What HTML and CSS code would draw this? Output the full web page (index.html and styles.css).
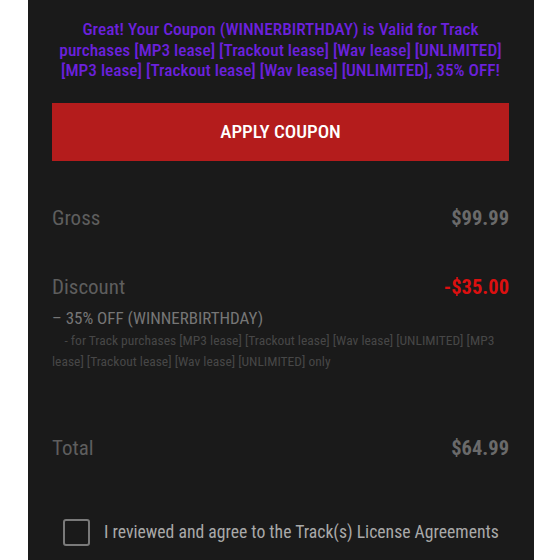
FILE: index.html
```html
<!DOCTYPE html>
<html lang="en">
<head>
  <meta charset="UTF-8">
  <meta name="viewport" content="width=device-width, initial-scale=1.0">
  <title>Checkout - Coupon</title>
  <link rel="stylesheet" href="styles.css">
</head>
<body>
  <div class="panel">
    <p class="notice">Great! Your Coupon (WINNERBIRTHDAY) is Valid for Track purchases [MP3 lease] [Trackout lease] [Wav lease] [UNLIMITED] [MP3 lease] [Trackout lease] [Wav lease] [UNLIMITED], 35% OFF!</p>

    <button class="btn-apply" type="button">APPLY COUPON</button>

    <div class="row gross">
      <span class="label">Gross</span>
      <span class="value">$99.99</span>
    </div>

    <div class="row discount">
      <span class="label">Discount</span>
      <span class="value red">-$35.00</span>
    </div>
    <div class="discount-name">&ndash; 35% OFF (WINNERBIRTHDAY)</div>
    <div class="discount-note">&nbsp;&nbsp;&nbsp;&nbsp;- for Track purchases [MP3 lease] [Trackout lease] [Wav lease] [UNLIMITED] [MP3 lease] [Trackout lease] [Wav lease] [UNLIMITED] only</div>

    <div class="row total">
      <span class="label">Total</span>
      <span class="value">$64.99</span>
    </div>

    <label class="agree">
      <input type="checkbox" class="check">
      <span class="box"></span>
      <span>I reviewed and agree to the Track(s) License Agreements</span>
    </label>
  </div>
</body>
</html>
```

FILE: styles.css
```css
body {
  margin: 0;
  padding: 0;
  background: #ffffff;
  font-family: 'Roboto', 'Liberation Sans', sans-serif;
  font-stretch: 75%;
}

.panel {
  width: 506px;
  min-height: 560px;
  margin-left: 28px;
  padding: 19px 25px 0 24px;
  box-sizing: border-box;
  background-color: #1a1a1a;
}

.notice {
  margin: 0;
  text-align: center;
  color: #6b21dc;
  font-size: 17.3px;
  font-weight: 500;
  line-height: 20.5px;
}

.btn-apply {
  display: block;
  width: 100%;
  height: 58px;
  margin-top: 22px;
  border: none;
  background-color: #b41c1c;
  color: #ffffff;
  font-family: inherit;
  font-stretch: 75%;
  font-size: 19px;
  font-weight: 500;
  cursor: pointer;
}

.row {
  display: flex;
  justify-content: space-between;
  align-items: center;
  font-size: 21px;
  line-height: 24px;
}

.label {
  color: #5e5e5e;
}

.value {
  color: #6a6a6a;
  font-size: 20.5px;
  font-weight: 700;
}

.red {
  color: #dc1010;
}

.gross {
  margin-top: 45px;
}

.discount {
  margin-top: 45px;
}

.discount-name {
  margin-top: 9px;
  color: #767676;
  font-size: 17px;
  line-height: 20px;
}

.discount-note {
  margin-top: 2px;
  color: #474747;
  font-size: 13.5px;
  line-height: 21px;
  white-space: pre-wrap;
}

.total {
  margin-top: 64px;
}

.agree {
  display: flex;
  align-items: center;
  gap: 14px;
  margin-top: 59px;
  padding-left: 11px;
  color: #a9a9a9;
  font-size: 17.7px;
}

.check {
  display: none;
}

.box {
  width: 23px;
  height: 23px;
  border: 2px solid #7a7a7a;
  border-radius: 3px;
}
```
